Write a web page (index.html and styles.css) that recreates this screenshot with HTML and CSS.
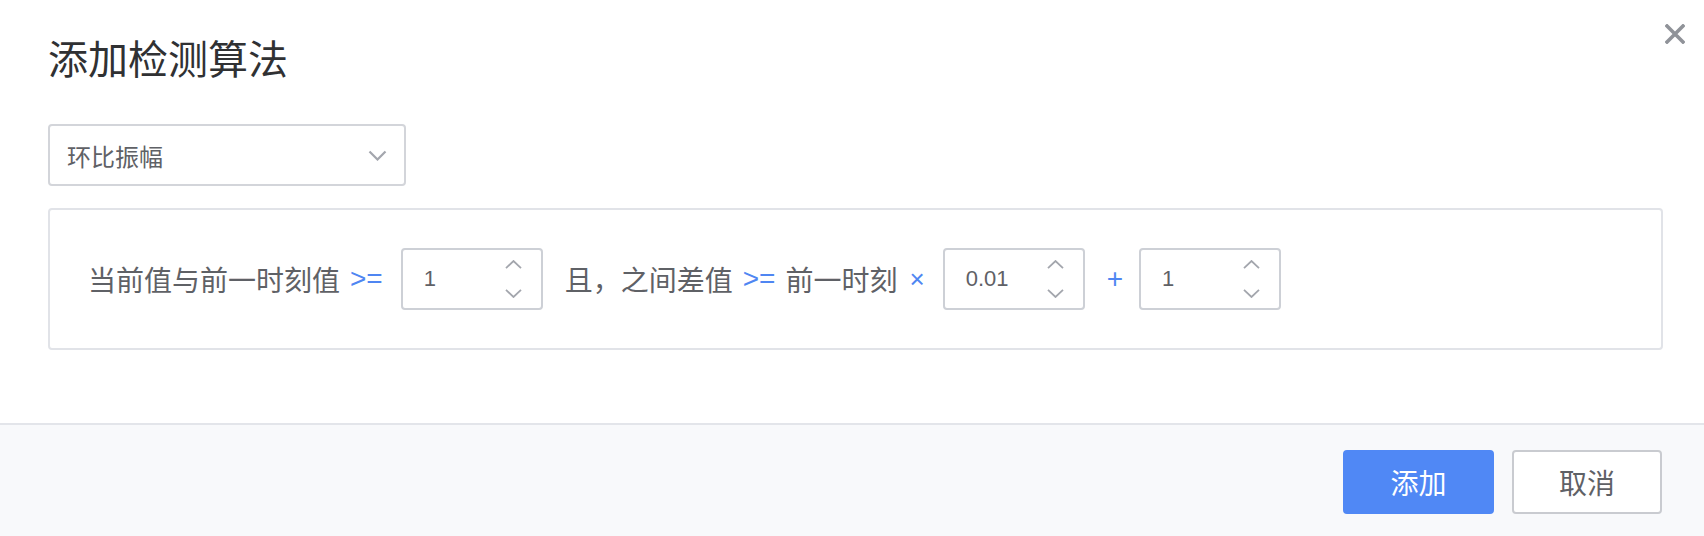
FILE: index.html
```html
<!DOCTYPE html>
<html lang="zh-CN">
<head>
<meta charset="utf-8">
<title>添加检测算法</title>
<link rel="stylesheet" href="styles.css">
</head>
<body>
<div class="dialog">
  <div class="dialog-header">
    <h2 class="dialog-title">添加检测算法</h2>
    <button class="close-btn" aria-label="关闭">
      <svg width="20" height="20" viewBox="0 0 20 20"><path d="M2 2 L18 18 M18 2 L2 18" stroke="#909399" stroke-width="3.6" stroke-linecap="square" fill="none"/></svg>
    </button>
  </div>
  <div class="dialog-body">
    <div class="select">
      <span class="select-value">环比振幅</span>
      <svg class="select-arrow" width="19" height="11" viewBox="0 0 19 11"><path d="M1.5 1.5 L9.5 9.5 L17.5 1.5" stroke="#a3a6ad" stroke-width="2.2" fill="none"/></svg>
    </div>
    <div class="condition">
      <span class="label">当前值与前一时刻值</span>
      <span class="op">&gt;=</span>
      <div class="num-input">
        <span class="num-value">1</span>
        <div class="spin">
          <svg width="17" height="9" viewBox="0 0 17 9"><path d="M1 8.2 L8.5 1 L16 8.2" stroke="#a3a6ad" stroke-width="1.8" fill="none"/></svg>
          <svg width="17" height="9" viewBox="0 0 17 9"><path d="M1 0.8 L8.5 8 L16 0.8" stroke="#a3a6ad" stroke-width="1.8" fill="none"/></svg>
        </div>
      </div>
      <span class="label">且，之间差值</span>
      <span class="op">&gt;=</span>
      <span class="label">前一时刻</span>
      <span class="op times">×</span>
      <div class="num-input">
        <span class="num-value">0.01</span>
        <div class="spin">
          <svg width="17" height="9" viewBox="0 0 17 9"><path d="M1 8.2 L8.5 1 L16 8.2" stroke="#a3a6ad" stroke-width="1.8" fill="none"/></svg>
          <svg width="17" height="9" viewBox="0 0 17 9"><path d="M1 0.8 L8.5 8 L16 0.8" stroke="#a3a6ad" stroke-width="1.8" fill="none"/></svg>
        </div>
      </div>
      <span class="op plus">+</span>
      <div class="num-input">
        <span class="num-value">1</span>
        <div class="spin">
          <svg width="17" height="9" viewBox="0 0 17 9"><path d="M1 8.2 L8.5 1 L16 8.2" stroke="#a3a6ad" stroke-width="1.8" fill="none"/></svg>
          <svg width="17" height="9" viewBox="0 0 17 9"><path d="M1 0.8 L8.5 8 L16 0.8" stroke="#a3a6ad" stroke-width="1.8" fill="none"/></svg>
        </div>
      </div>
    </div>
  </div>
  <div class="dialog-footer">
    <button class="btn btn-primary">添加</button>
    <button class="btn btn-default">取消</button>
  </div>
</div>
</body>
</html>
```

FILE: styles.css
```css
* { box-sizing: border-box; }
html, body {
  margin: 0;
  padding: 0;
  background: #ffffff;
}
body {
  width: 1704px;
  height: 536px;
  overflow: hidden;
  font-family: "Liberation Sans", "Noto Sans CJK SC", sans-serif;
  color: #5f6166;
}
.dialog {
  position: relative;
  display: flex;
  flex-direction: column;
  height: 536px;
}
.dialog-header {
  padding: 36px 41px 0 48px;
}
.dialog-title {
  margin: 0;
  font-size: 40px;
  line-height: 48px;
  font-weight: 400;
  color: #303133;
}
.close-btn {
  position: absolute;
  top: 24px;
  left: 1665px;
  width: 20px;
  height: 20px;
  padding: 0;
  border: 0;
  background: transparent;
  display: block;
}
.close-btn svg { display: block; }
.dialog-body {
  padding: 40px 41px 0 48px;
  flex: 1;
}
.select {
  width: 358px;
  height: 62px;
  border: 2px solid #d3d5da;
  border-radius: 4px;
  display: flex;
  align-items: center;
  justify-content: space-between;
  padding: 0 17px 0 17px;
}
.select-value {
  font-size: 24px;
  color: #5f6166;
}
.select-arrow { display: block; }
.condition {
  margin-top: 22px;
  height: 142px;
  border: 2px solid #e1e3e8;
  border-radius: 4px;
  display: flex;
  align-items: center;
  padding-left: 38px;
}
.label {
  font-size: 28px;
  color: #5f6166;
  white-space: nowrap;
}
.op {
  font-size: 28px;
  color: #4f86f2;
  margin: 0 10px 0 10px;
}
.op.times {
  font-size: 26px;
  margin: 0 10px 0 12px;
}
.op.plus {
  margin: 0 8px 0 0;
}
.num-input {
  width: 142px;
  height: 62px;
  border: 2px solid #cdd0d6;
  border-radius: 4px;
  display: flex;
  align-items: center;
  justify-content: space-between;
  padding: 0 19px 0 21px;
  margin: 0 22px 0 8px;
}
.num-value {
  font-size: 22px;
  color: #5f6166;
}
.spin {
  display: flex;
  flex-direction: column;
  gap: 20px;
}
.spin svg { display: block; }
.dialog-footer {
  height: 113px;
  border-top: 2px solid #e3e5ea;
  background: #f8f9fb;
  display: flex;
  align-items: center;
  justify-content: flex-end;
  gap: 18px;
  padding: 2px 42px 0 0;
}
.btn {
  width: 151px;
  height: 64px;
  border-radius: 4px;
  font-family: "Liberation Sans", "Noto Sans CJK SC", sans-serif;
  font-size: 28px;
  cursor: pointer;
}
.btn-primary {
  background: #5088f5;
  border: 2px solid #5088f5;
  color: #ffffff;
}
.btn-default {
  width: 150px;
  background: #ffffff;
  border: 2px solid #c9cbd0;
  color: #5f6166;
}
```
